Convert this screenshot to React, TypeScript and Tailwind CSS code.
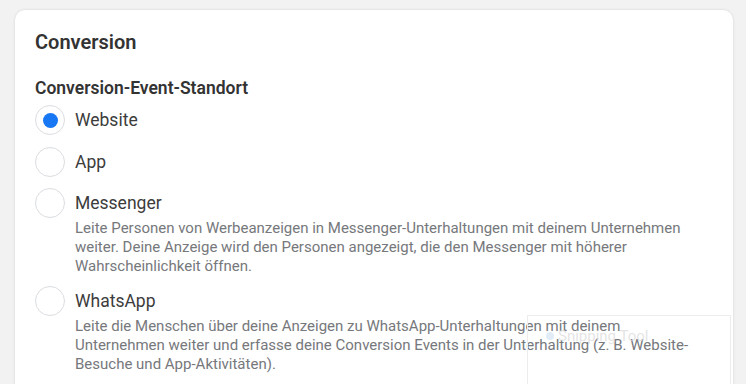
const options = [
  { label: "Website", checked: true, gap: "mb-[12px]" },
  { label: "App", gap: "mb-[11px]" },
  {
    label: "Messenger",
    gap: "mb-[10px]",
    desc: "Leite Personen von Werbeanzeigen in Messenger-Unterhaltungen mit deinem Unternehmen weiter. Deine Anzeige wird den Personen angezeigt, die den Messenger mit höherer Wahrscheinlichkeit öffnen.",
  },
  {
    label: "WhatsApp",
    gap: "mb-[10px]",
    desc: "Leite die Menschen über deine Anzeigen zu WhatsApp-Unterhaltungen mit deinem Unternehmen weiter und erfasse deine Conversion Events in der Unterhaltung (z. B. Website-Besuche und App-Aktivitäten).",
  },
];

function Radio({ checked }: { checked?: boolean }) {
  return (
    <div className="w-[30px] h-[30px] shrink-0 rounded-full border border-[#dadde1] bg-white flex items-center justify-center">
      {checked && <div className="w-[15px] h-[15px] rounded-full bg-[#1877f2]" />}
    </div>
  );
}

export default function App() {
  return (
    <div className="relative h-[384px] w-[746px] overflow-hidden bg-[#f2f2f2] pt-[10px] pl-[15px] pr-[13px] font-['Roboto',sans-serif]">
      <div className="h-[400px] rounded-[10px] bg-white shadow-[0_0_3px_rgba(0,0,0,0.12)] px-[20px] pt-[18px]">
        <h2 className="text-[20px] leading-[28px] font-semibold text-[#333]">Conversion</h2>
        <h3 className="mt-[20px] text-[17.5px] leading-[24px] font-semibold text-[#333]">Conversion-Event-Standort</h3>
        <div className="mt-[5px] flex flex-col">
          {options.map((o) => (
            <div key={o.label} className={`flex gap-[10px] ${o.gap}`}>
              <Radio checked={o.checked} />
              <div className="flex flex-col">
                <div className="text-[17.5px] leading-[30px] text-[#3c3c3c]">{o.label}</div>
                {o.desc && (
                  <p className="mt-[1px] w-[625px] text-[15px] leading-[19px] text-[#76787c]">{o.desc}</p>
                )}
              </div>
            </div>
          ))}
        </div>
      </div>
      <div className="absolute left-[527px] top-[315px] w-[204px] h-[80px] border border-[#ececec]">
        <div className="pl-[18px] pt-[9px] flex items-center gap-[4px] text-[15px] text-[#d8d8d8]/70">
          <span className="w-[8px] h-[8px] rounded-sm bg-[#cfe0f0]/60" />
          Snipping Tool
        </div>
      </div>
    </div>
  );
}
